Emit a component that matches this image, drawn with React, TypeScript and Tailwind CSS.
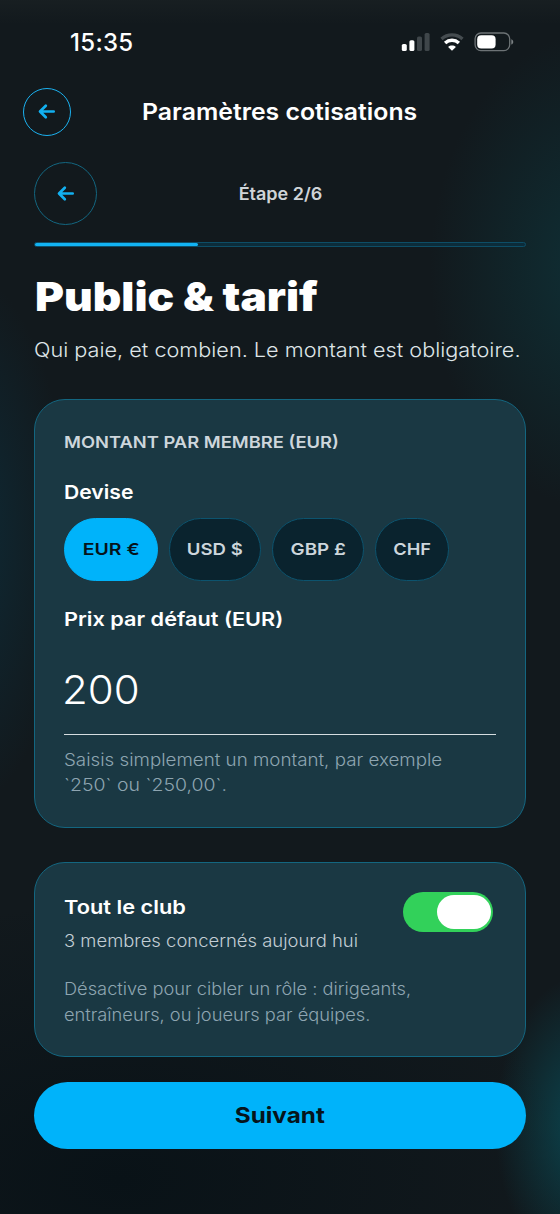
import React, { useState } from "react";

const INK = "inline-block origin-left whitespace-nowrap";

function ArrowLeft() {
  return (
    <svg className="-translate-x-[0.5px] -translate-y-[0.5px]" width="18" height="18" viewBox="0 0 18 18" fill="none" stroke="#12b0f0" strokeWidth="2.7" strokeLinecap="round" strokeLinejoin="round">
      <path d="M16.2 9H3M8.3 3.2 2.5 9 8.3 14.8" />
    </svg>
  );
}

function StatusBar() {
  return (
    <div className="flex h-[84px] items-center justify-between pl-[70px] pr-[46px]">
      <span className="pt-px text-[24px] leading-6 font-medium tracking-[0.3px]">15:35</span>
      <div className="flex items-center gap-[10px]">
        <svg width="29" height="18" viewBox="0 0 29 18">
          <rect x="0.8" y="11" width="5" height="7" rx="1.6" fill="#fff" />
          <rect x="8.4" y="7.2" width="5" height="10.8" rx="1.6" fill="#fff" />
          <rect x="16" y="3.6" width="5" height="14.4" rx="1.6" fill="#3f464a" />
          <rect x="23.6" y="0" width="5" height="18" rx="1.6" fill="#3f464a" />
        </svg>
        <svg width="24" height="18" viewBox="0 0 24 18" fill="none">
          <path d="M1.5 5.9C7.6.5 16.4.5 22.5 5.9" stroke="#454c50" strokeWidth="3.4" />
          <path d="M5.1 10c4-3.6 9.8-3.6 13.8 0" stroke="#fff" strokeWidth="3.4" />
          <path d="M12 17.8 8.1 14c2.2-1.9 5.6-1.9 7.8 0Z" fill="#fff" />
        </svg>
        <svg width="40" height="20" viewBox="0 0 40 20" fill="none">
          <rect x="1.1" y="1" width="34.6" height="17.6" rx="5.8" stroke="#6d7376" strokeWidth="1.3" />
          <rect x="3.2" y="3.2" width="18.4" height="13.2" rx="4" fill="#fff" />
          <path d="M37.3 7.2c2.6 1 2.6 4.4 0 5.4Z" fill="#7b8183" />
        </svg>
      </div>
    </div>
  );
}

const CURRENCIES = [
  { id: "EUR", label: "EUR €", box: "w-[94px]", ink: "scale-x-[1.18]" },
  { id: "USD", label: "USD $", box: "w-[91.5px]", ink: "scale-x-[1.126]" },
  { id: "GBP", label: "GBP £", box: "w-[91.5px]", ink: "scale-x-[1.14]" },
  { id: "CHF", label: "CHF", box: "w-[74.5px]", ink: "scale-x-[1.106]" },
];

function AmountCard() {
  const [currency, setCurrency] = useState("EUR");
  return (
    <section className="mt-[36px] flex h-[429px] flex-col rounded-[31px] border border-[#136680] bg-[#1a3843] px-[29px] pt-[30px]">
      <h2 className="h-6 text-[16.5px] leading-6 font-semibold text-[#cdd6dc]">
        <span className={`${INK} scale-x-[1.112]`}>MONTANT PAR MEMBRE (EUR)</span>
      </h2>
      <h3 className="mt-[27px] h-6 text-[19px] leading-6 font-semibold">
        <span className={`${INK} scale-x-[1.112]`}>Devise</span>
      </h3>
      <div className="mt-[13px] flex gap-[11.3px]">
        {CURRENCIES.map((c) => (
          <button
            key={c.id}
            onClick={() => setCurrency(c.id)}
            className={`${c.box} flex h-[63px] items-center justify-center rounded-full border pt-px text-[16.5px] font-semibold ${
              currency === c.id ? "border-[#00b3fa] bg-[#00b3fa] text-[#06141b]" : "border-[#0c536e] bg-[#0a232e] text-[#cdd6dc]"
            }`}
          >
            <span className={`${c.ink} inline-block whitespace-nowrap`}>{c.label}</span>
          </button>
        ))}
      </div>
      <h3 className="mt-[27px] h-6 text-[19px] leading-6 font-semibold">
        <span className={`${INK} scale-x-[1.142]`}>Prix par défaut (EUR)</span>
      </h3>
      <div className="mt-[34px] h-[69px] border-b border-[#d5dde0] text-[40px] leading-[48px] font-light">
        <span className={`${INK} -ml-[2px] scale-x-[1.05]`}>200</span>
      </div>
      <p className="mt-[13px] text-[17px] leading-[25.7px] font-light text-[#8ea5b1]">
        <span className={`${INK} scale-x-[1.103]`}>Saisis simplement un montant, par exemple</span>
        <br />
        <span className={`${INK} scale-x-[1.145]`}>`250` ou `250,00`.</span>
      </p>
    </section>
  );
}

function AudienceCard() {
  const [all, setAll] = useState(true);
  return (
    <section className="mt-[34.5px] h-[195px] rounded-[31px] border border-[#136680] bg-[#1a3843] px-[29px] pt-[29px]">
      <div className="flex justify-between pr-[3px]">
        <div className="pt-[4px]">
          <h3 className="h-6 text-[19px] leading-6 font-semibold">
            <span className={`${INK} -ml-[0.5px] scale-x-[1.146]`}>Tout le club</span>
          </h3>
          <p className="mt-[9px] h-6 text-[17px] leading-6 font-light text-[#c3ced5]">
            <span className={`${INK} -ml-[0.5px] scale-x-[1.085]`}>3 membres concernés aujourd hui</span>
          </p>
        </div>
        <button
          role="switch"
          aria-checked={all}
          aria-label="Tout le club"
          onClick={() => setAll(!all)}
          className={`flex h-10 w-[90px] items-center rounded-full px-[2.5px] ${all ? "justify-end bg-[#32d15a]" : "justify-start bg-[#39505a]"}`}
        >
          <span className="h-[34.5px] w-[53.5px] rounded-full bg-white" />
        </button>
      </div>
      <p className="mt-[24px] text-[17px] leading-[25.7px] font-light text-[#8ea5b1]">
        <span className={`${INK} scale-x-[1.073]`}>Désactive pour cibler un rôle : dirigeants,</span>
        <br />
        <span className={`${INK} scale-x-[1.073]`}>entraîneurs, ou joueurs par équipes.</span>
      </p>
    </section>
  );
}

export default function App() {
  return (
    <div className="h-[1214px] w-[560px] overflow-hidden bg-[#12191d] bg-[linear-gradient(180deg,#1d242680_0px,#1d242600_24px),radial-gradient(90px_150px_at_585px_1125px,#0b4650_0%,#0b465000_100%),radial-gradient(170px_240px_at_600px_270px,#0f3036_0%,#0f303600_100%),radial-gradient(110px_270px_at_-40px_540px,#0e2b37_0%,#0e2b3700_100%),radial-gradient(460px_280px_at_120px_1180px,#091217_0%,#09121700_100%)] font-['Inter','Liberation_Sans',sans-serif] text-white">
      <StatusBar />
      <header className="grid h-[55px] grid-cols-[1fr_auto_1fr] items-center px-[23px]">
        <button aria-label="Retour" className="flex size-12 items-center justify-center rounded-full border-[1.5px] border-[#1bb0ee]">
          <ArrowLeft />
        </button>
        <h1 className="text-[23px] leading-7 font-semibold">
          <span className="inline-block scale-x-[1.078] whitespace-nowrap">Paramètres cotisations</span>
        </h1>
      </header>
      <main className="px-[34px] pt-[23px]">
        <div className="grid grid-cols-[1fr_auto_1fr] items-center">
          <button aria-label="Étape précédente" className="flex size-[63px] items-center justify-center rounded-full border border-[#136680]">
            <ArrowLeft />
          </button>
          <span className="inline-block scale-x-[1.06] text-[17px] leading-6 font-semibold whitespace-nowrap text-[#cfd4d8]">Étape 2/6</span>
        </div>
        <div className="mt-[17px] h-[5px] rounded-full border border-[#0d4d66] bg-[#0c2c3a]">
          <div className="h-[3px] w-1/3 rounded-full bg-[#12b2f2]" />
        </div>
        <h2 className="mt-[25.5px] h-[48px] text-[39.5px] leading-[48px] font-black">
          <span className={`${INK} ml-[0.5px] scale-x-[1.12]`}>Public &amp; tarif</span>
        </h2>
        <p className="mt-[16px] h-[26px] text-[20px] leading-[26px] font-light text-[#dfe5e8]">
          <span className={`${INK} scale-x-[1.083]`}>Qui paie, et combien. Le montant est obligatoire.</span>
        </p>
        <AmountCard />
        <AudienceCard />
        <button className="mt-[24.5px] flex h-[67px] w-full items-center justify-center rounded-full bg-[#00b3fa] pt-px text-[22px] font-bold text-[#06141b]">
          <span className="inline-block scale-x-[1.104]">Suivant</span>
        </button>
      </main>
    </div>
  );
}
